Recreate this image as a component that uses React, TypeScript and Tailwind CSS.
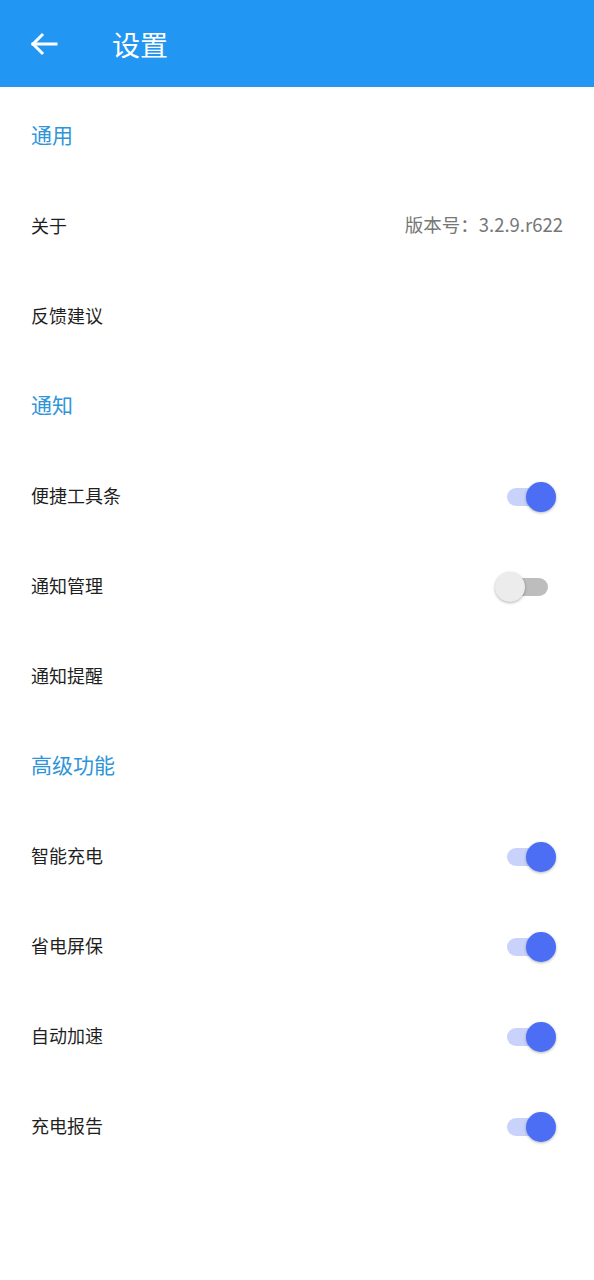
import React from "react";

const font = { fontFamily: '"Noto Sans CJK SC", "Noto Sans", Roboto, sans-serif' };

function Toggle({ on }: { on: boolean }) {
  return (
    <div className="relative w-[62px] h-[32px] flex items-center mr-[6px] mt-[4px]">
      <div
        className={
          "absolute left-[12px] w-[41px] h-[18px] rounded-full " +
          (on ? "bg-[#c9d2fb]" : "bg-[#bdbdbd]")
        }
      />
      <div
        className={
          "absolute top-[1px] w-[30px] h-[30px] rounded-full shadow-[0_1px_3px_rgba(0,0,0,0.3)] " +
          (on ? "left-[31px] bg-[#4c6ef5]" : "left-0 bg-[#ececec]")
        }
      />
    </div>
  );
}

function Section({ title }: { title: string }) {
  return (
    <div className="h-[90px] flex items-center px-[31px]">
      <span className="text-[21px] text-[#2f95d8]">{title}</span>
    </div>
  );
}

function Row({ label, right }: { label: string; right?: React.ReactNode }) {
  return (
    <div className="h-[90px] flex items-center justify-between pl-[31px] pr-[31px]">
      <span className="text-[18px] text-[#1f1f1f]">{label}</span>
      {right}
    </div>
  );
}

export default function App() {
  return (
    <div className="w-[594px] h-[1280px] bg-white" style={font}>
      <div className="h-[87px] bg-[#2196f3] flex items-center">
        <div className="w-[112px] flex items-center pl-[30px]">
          <svg width="28" height="24" viewBox="0 0 28 24" fill="none" stroke="white" strokeWidth="3" strokeLinecap="square" strokeLinejoin="miter">
            <path d="M3 12H26" />
            <path d="M12 3L3 12L12 21" />
          </svg>
        </div>
        <span className="text-[28px] text-white">设置</span>
      </div>
      <div className="pt-[3px]">
        <Section title="通用" />
        <Row label="关于" right={<span className="text-[18.5px] text-[#777777]">版本号：3.2.9.r622</span>} />
        <Row label="反馈建议" />
        <Section title="通知" />
        <Row label="便捷工具条" right={<Toggle on />} />
        <Row label="通知管理" right={<Toggle on={false} />} />
        <Row label="通知提醒" />
        <Section title="高级功能" />
        <Row label="智能充电" right={<Toggle on />} />
        <Row label="省电屏保" right={<Toggle on />} />
        <Row label="自动加速" right={<Toggle on />} />
        <Row label="充电报告" right={<Toggle on />} />
      </div>
    </div>
  );
}
